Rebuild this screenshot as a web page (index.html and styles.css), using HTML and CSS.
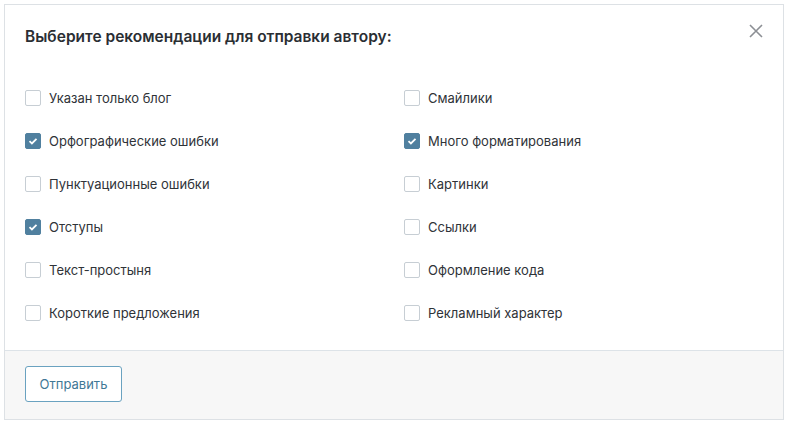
FILE: index.html
```html
<!DOCTYPE html>
<html lang="ru">
<head>
<meta charset="utf-8">
<link rel="stylesheet" href="styles.css">
</head>
<body>
<div class="dialog">
  <div class="main">
    <h1 class="title">Выберите рекомендации для отправки автору:</h1>
    <button class="close" aria-label="Закрыть">
      <svg width="14" height="14" viewBox="0 0 14 14"><path d="M1 1L13 13M13 1L1 13" stroke="#8c8f94" stroke-width="1.6" fill="none"/></svg>
    </button>
    <div class="grid">
      <label class="opt"><span class="box"></span>Указан только блог</label>
      <label class="opt"><span class="box"></span>Смайлики</label>
      <label class="opt"><span class="box on"><svg width="10" height="8" viewBox="0 0 10 8"><path d="M1.5 4.2L3.9 6.4L8.5 1.8" stroke="#fff" stroke-width="1.8" fill="none"/></svg></span>Орфографические ошибки</label>
      <label class="opt"><span class="box on"><svg width="10" height="8" viewBox="0 0 10 8"><path d="M1.5 4.2L3.9 6.4L8.5 1.8" stroke="#fff" stroke-width="1.8" fill="none"/></svg></span>Много форматирования</label>
      <label class="opt"><span class="box"></span>Пунктуационные ошибки</label>
      <label class="opt"><span class="box"></span>Картинки</label>
      <label class="opt"><span class="box on"><svg width="10" height="8" viewBox="0 0 10 8"><path d="M1.5 4.2L3.9 6.4L8.5 1.8" stroke="#fff" stroke-width="1.8" fill="none"/></svg></span>Отступы</label>
      <label class="opt"><span class="box"></span>Ссылки</label>
      <label class="opt"><span class="box"></span>Текст-простыня</label>
      <label class="opt"><span class="box"></span>Оформление кода</label>
      <label class="opt"><span class="box"></span>Короткие предложения</label>
      <label class="opt"><span class="box"></span>Рекламный характер</label>
    </div>
  </div>
  <div class="footer">
    <button class="send">Отправить</button>
  </div>
</div>
</body>
</html>
```

FILE: styles.css
```css
html, body { margin: 0; padding: 0; background: #fff; }
body { padding: 4px; font-family: Inter, "Noto Sans", sans-serif; color: #2c3338; }
.dialog { width: 778px; height: 414px; border: 1px solid #dde1e5; display: flex; flex-direction: column; box-sizing: content-box; }
.main { position: relative; padding: 22px 20px 28px 20px; flex: 1; }
.title { margin: 0; font-size: 15.5px; line-height: 20px; font-weight: 600; color: #2a2e33; letter-spacing: 0; }
.close { position: absolute; top: 19px; right: 20px; width: 14px; height: 14px; padding: 0; border: 0; background: none; display: block; }
.close svg { display: block; }
.grid { margin-top: 43px; display: grid; grid-template-columns: 379px 1fr; row-gap: 27px; }
.opt { display: flex; align-items: center; height: 16px; font-size: 13px; color: #2f3338; }
.box { width: 14px; height: 14px; border: 1px solid #c7ced4; border-radius: 2px; margin-right: 8px; display: flex; align-items: center; justify-content: center; flex: none; background: #fff; }
.box.on { background: #50809f; border-color: #50809f; }
.box svg { display: block; }
.footer { height: 69px; border-top: 1px solid #dde3e8; background: #f7f7f7; padding: 15px 20px; box-sizing: border-box; }
.send { height: 36px; width: 97px; border: 1px solid #6aa2c0; border-radius: 3px; background: #fff; color: #3f7896; font-family: Inter, "Noto Sans", sans-serif; font-size: 13px; padding: 0; }
```
